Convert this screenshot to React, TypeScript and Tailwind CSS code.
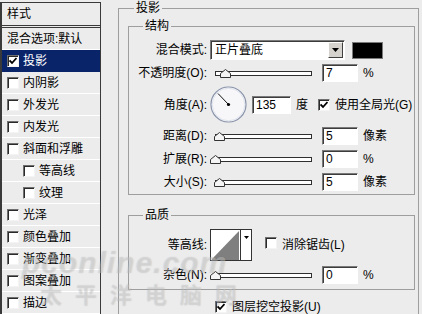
import React from "react";

const font = { fontFamily: '"Liberation Sans", "Noto Sans CJK SC", sans-serif' };

function Check({ checked = false }: { checked?: boolean }) {
  return (
    <span className="inline-flex h-[12px] w-[12px] shrink-0 items-center justify-center border border-t-[#6f6f6f] border-l-[#6f6f6f] border-b-[#f4f4f4] border-r-[#f4f4f4] bg-white shadow-[inset_1px_1px_0_#2a2a2a]">
      {checked && (
        <svg width="8" height="8" viewBox="0 0 8 8">
          <path d="M0.5 3.5 L3 6 L7.5 1" stroke="#000" strokeWidth="1.8" fill="none" />
        </svg>
      )}
    </span>
  );
}

function Slider({ pos }: { pos: number }) {
  return (
    <div className="relative h-[18px] w-[104px]">
      <div className="absolute left-[5px] top-[7px] h-[5px] w-[97px] border border-[#2f2f2f] bg-white" />
      <svg className="absolute top-[5px]" style={{ left: pos }} width="11" height="9" viewBox="0 0 11 9">
        <path d="M0.5 4.5 L5.5 0.5 L10.5 4.5 L10.5 8.5 L0.5 8.5 Z" fill="#f4f4f4" stroke="#333" strokeWidth="1" />
      </svg>
    </div>
  );
}

function NumBox({ value, w = "w-[36px]" }: { value: string; w?: string }) {
  return (
    <div
      className={
        w +
        " flex h-[18px] items-center border border-t-[#7a7a7a] border-l-[#7a7a7a] border-b-white border-r-white bg-white pl-[3px] text-[12px] shadow-[inset_1px_1px_0_#3c3c3c]"
      }
    >
      {value}
    </div>
  );
}

function SliderRow({ label, pos, value, unit, mt }: { label: string; pos: number; value: string; unit: string; mt: string }) {
  return (
    <div className={"flex h-[18px] items-center " + mt}>
      <span className="w-[78px] text-right">{label}</span>
      <span className="ml-[3px]">
        <Slider pos={pos} />
      </span>
      <span className="ml-[8px]">
        <NumBox value={value} />
      </span>
      <span className="ml-[5px]">{unit}</span>
    </div>
  );
}

const items = [
  { t: "内阴影" },
  { t: "外发光" },
  { t: "内发光" },
  { t: "斜面和浮雕" },
  { t: "等高线", sub: true },
  { t: "纹理", sub: true },
  { t: "光泽" },
  { t: "颜色叠加" },
  { t: "渐变叠加" },
  { t: "图案叠加" },
  { t: "描边" },
];

export default function App() {
  return (
    <div className="relative flex h-[314px] w-[422px] overflow-hidden bg-[#ececec] text-[12px] leading-[16px] text-black" style={font}>
      {/* left style list */}
      <div className="mt-[2px] flex h-[320px] w-[101px] shrink-0 flex-col border-l-2 border-r border-t border-[#3a3a3a]">
        <div className="flex h-[25px] items-center border-b-[3px] border-double border-[#3a3a3a] pl-[5px]">样式</div>
        <div className="flex h-[22px] items-center border-b border-white pl-[5px]">混合选项:默认</div>
        <div className="flex h-[22px] items-center gap-[4px] bg-[#0a246a] pl-[5px] text-white">
          <Check checked />
          投影
        </div>
        {items.map((it) => (
          <div
            key={it.t}
            className={"flex h-[22px] items-center gap-[4px] border-b border-white " + (it.sub ? "pl-[21px]" : "pl-[5px]")}
          >
            <Check />
            {it.t}
          </div>
        ))}
      </div>

      {/* right panel */}
      <div className="pl-[17px]">
        <fieldset className="h-[330px] w-[301px] border border-[#9e9e9e] pl-[9px] pr-[3px]">
          <legend className="ml-[6px] px-[2px] leading-[16px]">投影</legend>

          <fieldset className="mt-[2px] h-[177px] w-[287px] border border-[#9e9e9e]">
            <legend className="ml-[14px] px-[2px] leading-[16px]">结构</legend>

            <div className="mt-[6px] flex h-[20px] items-center">
              <span className="w-[78px] text-right">混合模式:</span>
              <div className="ml-[3px] flex h-[20px] w-[135px] items-stretch border border-t-[#7a7a7a] border-l-[#7a7a7a] border-b-white border-r-white bg-white shadow-[inset_1px_1px_0_#3c3c3c]">
                <span className="flex flex-1 items-center pl-[4px]">正片叠底</span>
                <span className="m-[1px] flex w-[15px] items-center justify-center border border-t-white border-l-white border-b-[#404040] border-r-[#404040] bg-[#d6d3ce]">
                  <svg width="7" height="4" viewBox="0 0 7 4">
                    <path d="M0 0 H7 L3.5 4 Z" fill="#000" />
                  </svg>
                </span>
              </div>
              <span className="ml-[7px] h-[17px] w-[31px] border border-[#7a7a7a] bg-black" />
            </div>

            <SliderRow label="不透明度(O):" pos={10} value="7" unit="%" mt="mt-[4px]" />

            <div className="mt-[4px] flex h-[37px] items-center">
              <span className="w-[78px] text-right">角度(A):</span>
              <svg className="ml-[3px]" width="38" height="37" viewBox="0 0 38 37">
                <circle cx="18.5" cy="18.5" r="17.5" fill="#f7f7f9" stroke="#8791a8" strokeWidth="1.2" />
                <circle cx="18.5" cy="18.5" r="16.3" fill="none" stroke="#dfe3ec" strokeWidth="1" />
                <line x1="8" y1="7.5" x2="18.5" y2="18.5" stroke="#111" strokeWidth="1" />
                <circle cx="18.5" cy="18.5" r="1.6" fill="#000" />
              </svg>
              <span className="ml-[4px]">
                <NumBox value="135" w="w-[39px]" />
              </span>
              <span className="ml-[5px]">度</span>
              <span className="ml-[10px]">
                <Check checked />
              </span>
              <span className="ml-[5px]">使用全局光(G)</span>
            </div>

            <SliderRow label="距离(D):" pos={4} value="5" unit="像素" mt="mt-[4px]" />
            <SliderRow label="扩展(R):" pos={0} value="0" unit="%" mt="mt-[5px]" />
            <SliderRow label="大小(S):" pos={4} value="5" unit="像素" mt="mt-[5px]" />
          </fieldset>

          <fieldset className="mt-[12px] h-[83px] w-[287px] border border-[#9e9e9e]">
            <legend className="ml-[14px] px-[2px] leading-[16px]">品质</legend>

            <div className="mt-[6px] flex h-[32px] items-center">
              <span className="w-[78px] text-right">等高线:</span>
              <div className="ml-[3px] flex h-[32px] w-[42px] border border-[#333] bg-white">
                <svg width="29" height="30" viewBox="0 0 29 30" className="shrink-0">
                  <path d="M1 29 L28 1 L28 30 L1 30 Z" fill="#7f7f7f" />
                </svg>
                <span className="flex flex-1 justify-center border-l border-[#333] pt-[6px]">
                  <svg width="5" height="3" viewBox="0 0 5 3">
                    <path d="M0 0 H5 L2.5 3 Z" fill="#000" />
                  </svg>
                </span>
              </div>
              <span className="ml-[13px]">
                <Check />
              </span>
              <span className="ml-[5px]">消除锯齿(L)</span>
            </div>

            <SliderRow label="杂色(N):" pos={0} value="0" unit="%" mt="mt-[5px]" />
          </fieldset>

          <div className="mt-[9px] flex items-center pl-[87px]">
            <Check checked />
            <span className="ml-[5px]">图层挖空投影(U)</span>
          </div>
        </fieldset>
      </div>

      {/* watermark */}
      <div className="pointer-events-none absolute left-[22px] top-[246px] select-none text-[30px] font-bold italic leading-[34px] tracking-[1px] text-white/30 [text-shadow:0_0_1px_rgba(90,90,90,0.3)]">
        pconline.com
      </div>
      <div className="pointer-events-none absolute left-[40px] top-[283px] select-none text-[22px] font-bold leading-[26px] tracking-[13px] text-white/30 [text-shadow:0_0_1px_rgba(90,90,90,0.3)]">
        太平洋电脑网
      </div>
    </div>
  );
}
